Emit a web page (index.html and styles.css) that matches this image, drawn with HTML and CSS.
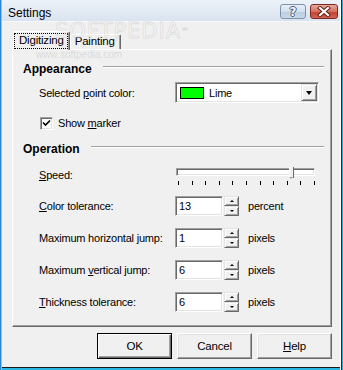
FILE: index.html
```html
<!DOCTYPE html>
<html>
<head>
<meta charset="utf-8">
<link rel="stylesheet" href="styles.css">
</head>
<body>
<div class="window">
  <div class="titlebar">
    <span class="title">Settings</span>
    <div class="tb-buttons">
      <div class="tb-btn tb-help"><span class="qmark">?</span></div>
      <div class="tb-btn tb-close">
        <svg width="14" height="11" viewBox="0 0 14 11">
          <path d="M3 2 L11 9 M11 2 L3 9" stroke="#5a1a14" stroke-width="4" stroke-linecap="square"/>
          <path d="M3 2 L11 9 M11 2 L3 9" stroke="#ffffff" stroke-width="2.2" stroke-linecap="square"/>
        </svg>
      </div>
    </div>
  </div>
  <div class="client">
    <div class="tabs">
      <div class="tab tab-sel"><span class="focus">Digitizing</span></div>
      <div class="tab">Painting</div>
    </div>
    <div class="panel">
      <div class="group-head"><span class="gh-text">Appearance</span><i class="etch"></i></div>
      <div class="row row-combo">
        <span class="label">Selected <u>p</u>oint color:</span>
        <div class="combo">
          <span class="swatch"></span>
          <span class="combo-text">Lime</span>
          <span class="combo-btn"><i class="tri-down"></i></span>
        </div>
      </div>
      <div class="row row-check">
        <span class="checkbox">
          <svg width="9" height="9" viewBox="0 0 9 9"><path d="M1 3.5 L3.5 6 L8 1.5" stroke="#000" stroke-width="1.6" fill="none"/></svg>
        </span>
        <span>Show <u>m</u>arker</span>
      </div>
      <div class="group-head gh-op"><span class="gh-text">Operation</span><i class="etch"></i></div>
      <div class="row row-speed">
        <span class="label"><u>S</u>peed:</span>
        <div class="slider">
          <div class="track"><span class="thumb"></span></div>
          <div class="ticks">
            <i></i><i></i><i></i><i></i><i></i><i></i><i></i><i></i><i></i><i></i><i></i>
          </div>
        </div>
      </div>
      <div class="row row-spin row-first">
        <span class="label"><u>C</u>olor tolerance:</span>
        <span class="edit">13</span>
        <span class="spin"><span class="spin-btn"><i class="tri-up"></i></span><span class="spin-btn"><i class="tri-dn"></i></span></span>
        <span class="unit">percent</span>
      </div>
      <div class="row row-spin">
        <span class="label">Maximum horizontal jump:</span>
        <span class="edit">1</span>
        <span class="spin"><span class="spin-btn"><i class="tri-up"></i></span><span class="spin-btn"><i class="tri-dn"></i></span></span>
        <span class="unit">pixels</span>
      </div>
      <div class="row row-spin">
        <span class="label">Maximum <u>v</u>ertical jump:</span>
        <span class="edit">6</span>
        <span class="spin"><span class="spin-btn"><i class="tri-up"></i></span><span class="spin-btn"><i class="tri-dn"></i></span></span>
        <span class="unit">pixels</span>
      </div>
      <div class="row row-spin">
        <span class="label"><u>T</u>hickness tolerance:</span>
        <span class="edit">6</span>
        <span class="spin"><span class="spin-btn"><i class="tri-up"></i></span><span class="spin-btn"><i class="tri-dn"></i></span></span>
        <span class="unit">pixels</span>
      </div>
    </div>
    <div class="buttons">
      <div class="btn btn-default"><span>OK</span></div>
      <div class="btn"><span>Cancel</span></div>
      <div class="btn"><span><u>H</u>elp</span></div>
    </div>
  </div>
  <div class="wm-big">SOFTPEDIA<sup>™</sup></div>
  <div class="wm-small">www.softpedia.com</div>
</div>
</body>
</html>
```

FILE: styles.css
```css
* { box-sizing: border-box; }
html, body { margin: 0; padding: 0; }
body {
  width: 343px;
  height: 370px;
  background: #f0f0f0;
  font-family: "Liberation Sans", Arial, sans-serif;
  font-size: 11px;
  letter-spacing: -0.2px;
  color: #000;
  overflow: hidden;
}
u { text-decoration: underline; text-underline-offset: 1px; }

.window {
  position: relative;
  width: 343px;
  height: 370px;
  background: #f0f0f0;
  padding: 0 3px 3px 2px;
  display: flex;
  flex-direction: column;
  box-shadow:
    inset 1px 0 #2a86d2,
    inset 2px 0 #8cc4ec,
    inset -1px 0 #2ab2e2,
    inset -2px 0 #1c2a3a,
    inset -3px 0 #ffffff,
    inset 0 -2px #2ab8e2,
    inset 0 -3px #1a1a1a;
}

.titlebar {
  height: 22px;
  flex: none;
  display: flex;
  align-items: flex-start;
  padding: 4px 2px 0 6px;
  background: linear-gradient(#edf2f8, #d9e3ef);
  border-bottom: 1px solid #f6f8fb;
}
.title {
  font-size: 12px;
  letter-spacing: 0;
  line-height: 15px;
  color: #000;
  margin-top: 2px;
}
.tb-buttons {
  margin-left: auto;
  display: flex;
  gap: 4px;
}
.tb-btn {
  height: 15px;
  border-radius: 3px;
  display: flex;
  align-items: center;
  justify-content: center;
}
.tb-help {
  width: 26px;
  border: 1px solid #7d93ad;
  background: linear-gradient(#e8eff7 0%, #d2dfee 50%, #bccde2 51%, #c9d8ea 100%);
}
.qmark {
  font-family: "DejaVu Sans", sans-serif;
  font-weight: bold;
  font-size: 12px;
  line-height: 12px;
  letter-spacing: 0;
  color: #f4f6f9;
  text-shadow: -1px 0 #4d5d72, 1px 0 #4d5d72, 0 -1px #4d5d72, 0 1px #4d5d72;
}
.tb-close {
  width: 28px;
  border: 1px solid #7a2a22;
  background: linear-gradient(#e9a99c 0%, #d5715f 50%, #c2422f 51%, #d06550 100%);
}

.client {
  flex: 1;
  display: flex;
  flex-direction: column;
  padding: 9px 8px 0 10px;
}

.tabs {
  height: 18px;
  display: flex;
  align-items: flex-end;
  padding-left: 1px;
  position: relative;
  z-index: 1;
}
.tab {
  height: 15px;
  padding: 0 5px 0 4px;
  background: #f0f0f0;
  border-left: 1px solid #fff;
  border-top: 1px solid #fff;
  border-right: 1px solid #696969;
  border-top-left-radius: 2px;
  border-top-right-radius: 2px;
  box-shadow: inset -1px 0 #a0a0a0;
  line-height: 13px;
  font-size: 11.5px;
}
.tab-sel {
  height: 19px;
  margin-bottom: -1px;
  padding: 2px 2px 0 1px;
  line-height: 13px;
}
.focus {
  display: inline-block;
  outline: 1px dotted #000;
  outline-offset: 0;
  padding: 0 3px 1px 4px;
}

.panel {
  width: 320px;
  height: 278px;
  flex: none;
  border: 1px solid;
  border-color: #fff #696969 #696969 #fff;
  box-shadow: inset -1px -1px #a0a0a0;
  padding: 0 7px 0 0;
  display: flex;
  flex-direction: column;
}

.group-head {
  height: 14px;
  display: flex;
  align-items: flex-start;
  padding-left: 10px;
  margin-top: 12px;
}
.gh-text {
  font-weight: bold;
  font-size: 12px;
  letter-spacing: 0;
  line-height: 14px;
}
.etch {
  flex: 1;
  height: 2px;
  margin-top: 4px;
  margin-left: 11px;
  border-top: 1px solid #a0a0a0;
  border-bottom: 1px solid #fff;
}

.row {
  display: flex;
  align-items: center;
  padding-left: 26px;
  line-height: 14px;
}
.label { width: 136px; flex: none; }

.row-combo { height: 21px; margin-top: 6px; }
.combo {
  width: 144px;
  height: 21px;
  background: #fff;
  border: 1px solid;
  border-color: #a0a0a0 #fff #fff #a0a0a0;
  box-shadow: inset 1px 1px #696969, inset -1px -1px #e3e3e3;
  display: flex;
  align-items: center;
  padding: 1px 1px 1px 4px;
}
.swatch {
  width: 24px;
  height: 12px;
  background: #00ff00;
  border: 1px solid #000;
  flex: none;
}
.combo-text { margin-left: 5px; }
.combo-btn {
  margin-left: auto;
  width: 16px;
  height: 17px;
  background: #f0f0f0;
  border: 1px solid;
  border-color: #e3e3e3 #696969 #696969 #e3e3e3;
  box-shadow: inset 1px 1px #fff, inset -1px -1px #a0a0a0;
  display: flex;
  align-items: center;
  justify-content: center;
}
.tri-down {
  width: 0; height: 0;
  border-left: 3.5px solid transparent;
  border-right: 3.5px solid transparent;
  border-top: 4px solid #000;
  margin-top: 1px;
}

.row-check {
  height: 15px;
  margin-top: 12px;
  padding-left: 27px;
  align-items: flex-start;
}
.checkbox {
  width: 13px;
  height: 13px;
  margin-top: 2px;
  margin-right: 5px;
  background: #fff;
  border: 1px solid;
  border-color: #a0a0a0 #fff #fff #a0a0a0;
  box-shadow: inset 1px 1px #696969, inset -1px -1px #e3e3e3;
  display: flex;
  align-items: center;
  justify-content: center;
}
.row-check > span:last-child { line-height: 15px; margin-top: 1px; }

.row-speed {
  height: 22px;
  margin-top: 9px;
  align-items: flex-start;
}
.row-speed .label { line-height: 20px; }
.slider {
  width: 139px;
  margin-left: 1px;
  display: flex;
  flex-direction: column;
}
.track {
  position: relative;
  height: 8px;
  margin-top: 3px;
  background: #fff;
  border: 1px solid;
  border-color: #a0a0a0 #fff #fff #a0a0a0;
  box-shadow: inset 1px 1px #696969, inset -1px -1px #e3e3e3;
}
.thumb {
  position: absolute;
  left: 112px;
  top: -2px;
  width: 5px;
  height: 11px;
  background: #f0f0f0;
  border-left: 1px solid #fff;
  border-right: 1px solid #696969;
}
.thumb::after {
  content: "";
  position: absolute;
  left: -1px;
  top: 10px;
  border-left: 2px solid transparent;
  border-right: 2px solid transparent;
  border-top: 2px solid #a0a0a0;
}
.ticks {
  height: 4px;
  margin-top: 5px;
  padding: 0 0 0 2px;
  display: flex;
  justify-content: space-between;
}
.ticks i {
  width: 1px;
  height: 4px;
  background: #000;
}

.row-spin { height: 20px; margin-top: 12px; }
.row-first { margin-top: 9px; }
.edit {
  width: 48px;
  height: 20px;
  background: #fff;
  border: 1px solid;
  border-color: #a0a0a0 #fff #fff #a0a0a0;
  box-shadow: inset 1px 1px #696969, inset -1px -1px #e3e3e3;
  padding: 3px 0 0 3px;
  line-height: 13px;
  font-size: 11px;
}
.spin {
  width: 15px;
  height: 20px;
  margin-left: 1px;
  display: flex;
  flex-direction: column;
}
.spin-btn {
  flex: 1;
  background: #f0f0f0;
  border: 1px solid;
  border-color: #e3e3e3 #696969 #696969 #e3e3e3;
  box-shadow: inset 1px 1px #fff, inset -1px -1px #a0a0a0;
  display: flex;
  align-items: center;
  justify-content: center;
}
.tri-up {
  width: 0; height: 0;
  border-left: 2px solid transparent;
  border-right: 2px solid transparent;
  border-bottom: 2px solid #000;
}
.tri-dn {
  width: 0; height: 0;
  border-left: 2px solid transparent;
  border-right: 2px solid transparent;
  border-top: 2px solid #000;
}
.unit { margin-left: 9px; }

.buttons {
  display: flex;
  justify-content: flex-end;
  gap: 5px;
  margin-top: 6px;
}
.btn {
  width: 75px;
  height: 26px;
  background: #f0f0f0;
  border: 1px solid;
  border-color: #fff #696969 #696969 #fff;
  box-shadow: inset -1px -1px #a0a0a0, inset 1px 1px #e3e3e3;
  display: flex;
  align-items: center;
  justify-content: center;
  font-size: 11.5px;
}
.btn-default {
  border: 1px solid #000;
  box-shadow: inset 1px 1px #fff, inset -1px -1px #696969, inset -2px -2px #a0a0a0;
}

.wm-big {
  position: absolute;
  left: 55px;
  top: 21px;
  font-family: "DejaVu Sans", sans-serif;
  font-size: 21px;
  line-height: 21px;
  letter-spacing: 1px;
  color: rgba(255,255,255,0.35);
  -webkit-text-stroke: 0.8px rgba(170,170,170,0.3);
  pointer-events: none;
  z-index: 3;
}
.wm-big sup { font-size: 8px; vertical-align: top; position: relative; top: 0; }
.wm-small {
  position: absolute;
  left: 36px;
  top: 50px;
  font-size: 10px;
  line-height: 10px;
  letter-spacing: 0;
  color: rgba(160,160,160,0.3);
  pointer-events: none;
  z-index: 3;
}
```
